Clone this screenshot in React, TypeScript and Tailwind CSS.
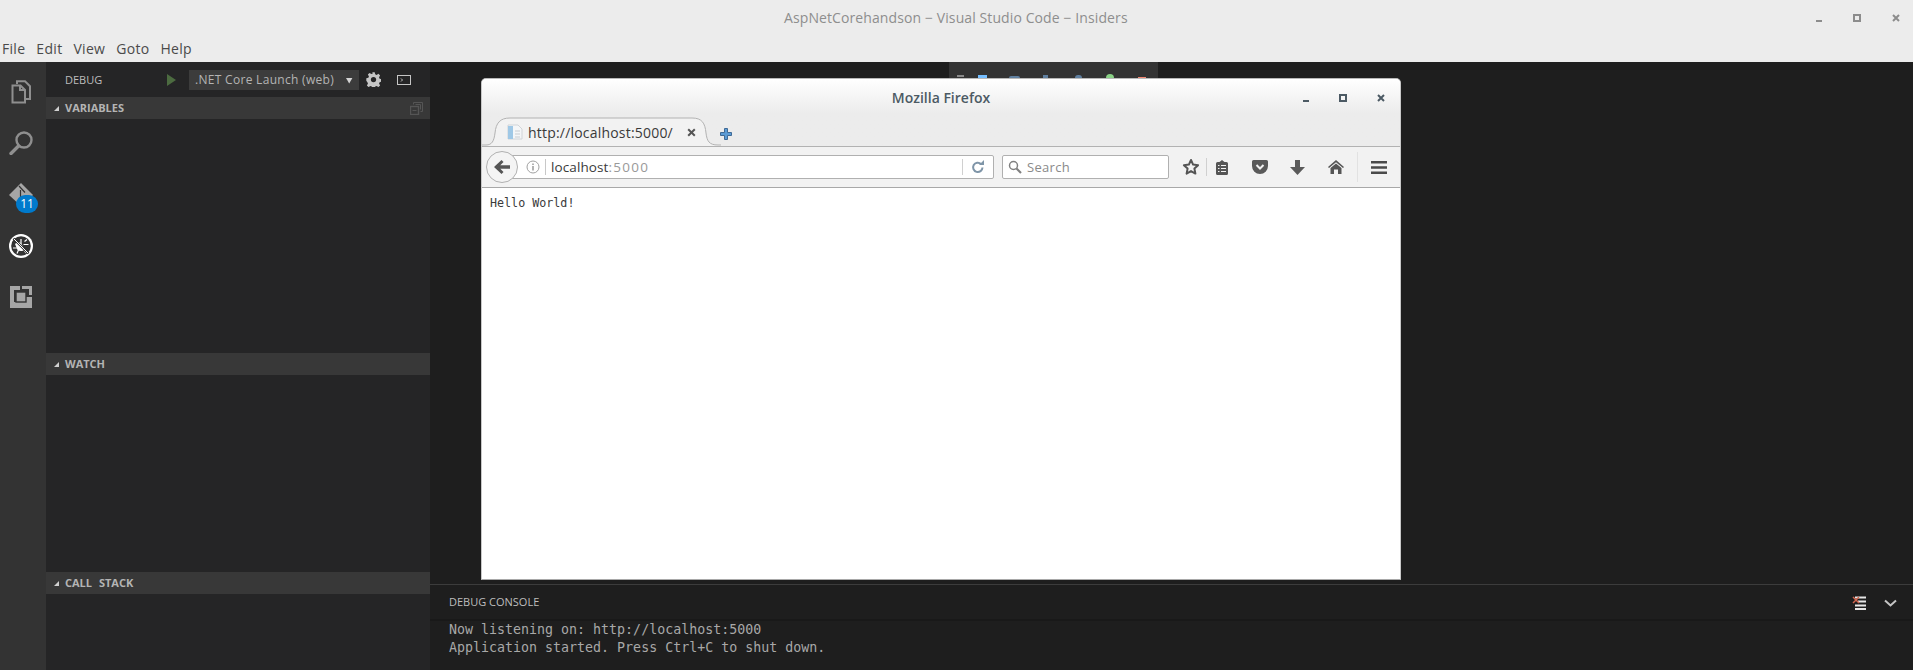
import type { ReactNode } from "react";

const UI_FONT = "font-['Open_Sans','Noto_Sans',sans-serif]";

/* ---------- shared bits ---------- */

function WinControls({ color, gap }: { color: string; gap: string }) {
  return (
    <div className={`flex items-center ${gap}`}>
      <svg width="6" height="12" viewBox="0 0 6 12">
        <rect x="0" y="8" width="6" height="2" fill={color} />
      </svg>
      <svg width="8" height="12" viewBox="0 0 8 12">
        <rect x="1" y="3" width="6" height="6" fill="none" stroke={color} strokeWidth="2" />
      </svg>
      <svg width="8" height="12" viewBox="0 0 8 12">
        <path d="M1 3l6 6M7 3l-6 6" stroke={color} strokeWidth="2" fill="none" />
      </svg>
    </div>
  );
}

function PanelHeader({ label, children }: { label: string; children?: ReactNode }) {
  return (
    <div className="flex h-[22px] items-center bg-[#383838] pl-[8px] pr-[7px]">
      <svg width="7" height="7" viewBox="0 0 7 7" className="mr-[4px] -translate-x-[1px]">
        <path d="M6 1v5H1z" fill="#d0d0d0" />
      </svg>
      <span className="text-[11px] font-bold text-[#b4b4b4] [word-spacing:4px]">{label}</span>
      <div className="ml-auto">{children}</div>
    </div>
  );
}

/* ---------- activity bar ---------- */

function ActivityBar() {
  return (
    <div className="flex w-[46px] shrink-0 flex-col items-center bg-[#333333] pr-[4px] pt-[18px]">
      <div className="flex h-[51px] w-full items-start justify-center">
        <svg width="20" height="24" viewBox="0 0 20 24" fill="none" stroke="#8f8f8f" strokeWidth="2">
          <path d="M6 4V1.200h8l5 5V19h-4" />
          <path d="M1.500 5.500h8l4.500 4.500v12.500H1.500z" />
          <path d="M9 5.500V10h5" />
        </svg>
      </div>
      <div className="flex h-[52px] w-full items-start justify-center">
        <svg width="24" height="24" viewBox="0 0 24 24" fill="none" stroke="#8f8f8f">
          <circle cx="15" cy="9" r="7.500" strokeWidth="2.400" />
          <path d="M9.500 15l-7.500 7.500" strokeWidth="3.400" strokeLinecap="round" />
        </svg>
      </div>
      <div className="relative flex h-[51px] w-full items-start justify-center">
        <svg width="24" height="24" viewBox="0 0 24 24">
          <path d="M12 0l12 12L13 24 0 12z" fill="#a6a6a6" />
          <path d="M10 3l6 6.500M11.500 7v8" stroke="#333333" strokeWidth="1.200" fill="none" />
        </svg>
        <span className="absolute left-[16px] top-[12px] flex h-[18px] w-[22px] items-center justify-center rounded-full bg-[#007acc] text-[12px] text-white">
          11
        </span>
      </div>
      <div className="flex h-[52px] w-full items-start justify-center">
        <svg width="24" height="24" viewBox="0 0 24 24">
          <circle cx="12" cy="12" r="12" fill="#ffffff" />
          <circle cx="12" cy="12" r="9.800" fill="#333333" />
          <path d="M6 10c2-2 4-2.500 6-1l3.500 6.500c-1.500 2-5 2-7 .5z" fill="#ffffff" />
          <path d="M12 5v5M15.500 7.500l2.500-2M14.500 10.500H19.500M4 14h4M8 19.500l1.500-3.500M15.500 17l2 2" stroke="#ffffff" strokeWidth="1.200" />
          <path d="M4.500 4.500l15 15" stroke="#333333" strokeWidth="2.400" />
          <path d="M5 5l14 14" stroke="#ffffff" strokeWidth="1" />
        </svg>
      </div>
      <div className="flex h-[52px] w-full items-start justify-center">
        <svg width="22" height="22" viewBox="0 0 22 22">
          <path d="M0 0h10v4H4v12h12v-5h6v11H0z" fill="#a6a6a6" />
          <path d="M12 0h10v9h-3V3h-7z" fill="#a6a6a6" />
          <rect x="6" y="6" width="10" height="10" fill="#a6a6a6" stroke="#333333" strokeWidth="1.400" />
        </svg>
      </div>
    </div>
  );
}

/* ---------- debug sidebar ---------- */

function DebugToolbar() {
  return (
    <div className="flex h-[35px] items-center pl-[19px]">
      <span className="w-[102px] pt-[1px] text-[11px] text-[#bdbdbd]">DEBUG</span>
      <svg width="9" height="12" viewBox="0 0 9 12">
        <path d="M0 0l9 6-9 6z" fill="#4c6b40" />
      </svg>
      <div className="ml-[13px] flex h-[20px] w-[170px] items-center justify-between bg-[#3c3c3c] pl-[6px] pr-[6px] pt-[1px] text-[12px] tracking-[0.3px] text-[#b4b4b4]">
        <span>.NET Core Launch (web)</span>
        <svg width="7" height="7" viewBox="0 0 7 7">
          <path d="M0 1h6.400L3.200 6.500z" fill="#d4d4d4" />
        </svg>
      </div>
      <svg width="15" height="15" viewBox="0 0 24 24" className="ml-[7px]">
        <path
          d="M10 0h4l.8 3.400 2.400 1 3-1.800 2.800 2.800-1.800 3 1 2.400 3.400.8v4l-3.400.8-1 2.400 1.800 3-2.800 2.800-3-1.800-2.400 1-.8 3.400h-4l-.8-3.400-2.400-1-3 1.800-2.800-2.800 1.800-3-1-2.400L0 14v-4l3.400-.8 1-2.400-1.800-3 2.800-2.800 3 1.800 2.400-1z"
          fill="#c5c5c5"
          transform="scale(0.96) translate(.5 .5)"
        />
        <circle cx="12" cy="12" r="4.200" fill="#252526" />
      </svg>
      <svg width="14" height="10" viewBox="0 0 14 10" fill="none" className="ml-[16px]">
        <rect x=".5" y=".5" width="13" height="9" stroke="#c5c5c5" />
        <path d="M4 3.500L5.500 5 4 6.500" stroke="#c5c5c5" />
      </svg>
    </div>
  );
}

function Sidebar() {
  return (
    <div className="flex w-[384px] shrink-0 flex-col bg-[#252526]">
      <DebugToolbar />
      <PanelHeader label="VARIABLES">
        <svg width="13" height="13" viewBox="0 0 13 13" fill="none" stroke="#555555" className="block">
          <path d="M3.500 2.500V.5h9v9h-2M5.500 2.500h5v5" />
          <rect x=".5" y="4.500" width="8" height="8" strokeWidth="1.400" />
          <path d="M2.500 8.500h4" />
        </svg>
      </PanelHeader>
      <div className="h-[234px]" />
      <PanelHeader label="WATCH" />
      <div className="h-[197px]" />
      <PanelHeader label="CALL STACK" />
      <div className="flex-1" />
    </div>
  );
}

/* ---------- firefox window ---------- */

function ToolbarIcons() {
  return (
    <div className="flex shrink-0 items-center">
      {/* star */}
      <svg width="18" height="18" viewBox="0 0 18 18" className="ml-[13px]">
        <path d="M9 2l2.100 4.600 5 .6-3.700 3.400 1 5L9 13.100l-4.400 2.500 1-5L1.900 7.200l5-.6z" fill="none" stroke="#555555" strokeWidth="2" strokeLinejoin="round" />
      </svg>
      <div className="ml-[6px] h-[18px] w-px bg-[#d0d0d0]" />
      {/* clipboard list */}
      <svg width="14" height="15" viewBox="0 0 14 15" className="ml-[8px]">
        <path d="M1 3.500a1.500 1.500 0 0 1 1.500-1.500H4.500L7 0l2.500 2H11.500A1.500 1.500 0 0 1 13 3.500V13.500A1.500 1.500 0 0 1 11.500 15H2.500A1.500 1.500 0 0 1 1 13.500z" fill="#555555" />
        <path d="M3 5.500h1.500M3 8.500h1.500M3 11.500h1.500M6 5.500h5M6 8.500h5M6 11.500h5" stroke="#f2f2f2" strokeWidth="1.200" />
      </svg>
      {/* pocket */}
      <svg width="16" height="14" viewBox="0 0 16 14" className="ml-[23px]">
        <path d="M1.500 0h13A1.500 1.500 0 0 1 16 1.500V6a8 8 0 0 1-16 0V1.500A1.500 1.500 0 0 1 1.500 0z" fill="#5a5a5a" />
        <path d="M4.500 5L8 8.500 11.500 5" stroke="#f2f2f2" strokeWidth="2" fill="none" />
      </svg>
      {/* download */}
      <svg width="15" height="15" viewBox="0 0 15 15" className="ml-[22px]">
        <path d="M5 0h5v7h5l-7.500 8L0 7h5z" fill="#5a5a5a" />
      </svg>
      {/* home */}
      <svg width="16" height="14" viewBox="0 0 16 14" className="ml-[23px]">
        <path d="M8 0l8 7-1 1-7-5.800L1 8 0 7z" fill="#555555" />
        <path d="M8 3.600L13.500 8v6H10V9.500H6V14H2.500V8z" fill="#555555" />
      </svg>
      <div className="ml-[13px] h-[30px] w-px bg-[#e2e2e2]" />
      {/* hamburger */}
      <svg width="16" height="13" viewBox="0 0 16 13" className="ml-[13px]">
        <path d="M0 0h16v2.400H0zM0 5.300h16v2.400H0zM0 10.600h16V13H0z" fill="#4a4a4a" />
      </svg>
    </div>
  );
}

function TabStrip() {
  return (
    <div className="flex h-[41px] items-end border-b border-[#b2b2b2]">
      <div className="relative flex h-[29px] w-[239px] shrink-0 items-center pl-[25px] pt-[1px]">
        <svg width="239" height="29" viewBox="0 0 239 29" className="absolute left-0 top-0" fill="none">
          <path
            d="M0 28H4C10 28 12 24 13 16C14 6 18 1 28 1H210C220 1 223 6 224 16C225 24 227 28 236 28H239V29H0z"
            fill="#f2f2f2"
          />
          <path
            d="M0 28H4C10 28 12 24 13 16C14 6 18 1 28 1H210C220 1 223 6 224 16C225 24 227 28 236 28H239"
            stroke="#b2b2b2"
          />
        </svg>
        <svg width="16" height="16" viewBox="0 0 16 16" className="relative">
          <path d="M1 1h10l4 4v10H1z" fill="#f4f6f8" stroke="#d0d4d8" />
          <rect x="1" y="2" width="5" height="13" fill="#9fc8e6" />
          <path d="M8 7h5M8 10h5M8 13h5" stroke="#c8ccd0" />
        </svg>
        <span className="relative ml-[5px] w-[159px] text-[14px] tracking-[0.2px] text-[#3a3a3a]">http://localhost:5000/</span>
        <svg width="9" height="9" viewBox="0 0 9 9" className="relative">
          <path d="M1.200 1.200l6.600 6.600M7.800 1.200L1.200 7.800" stroke="#555555" strokeWidth="2" />
        </svg>
      </div>
      <svg width="12" height="12" viewBox="0 0 12 12" className="mb-[6px] -ml-[1px]">
        <path d="M4.500 .5h3v4h4v3h-4v4h-3v-4h-4v-3h4z" fill="#5b9bd5" stroke="#3f6a96" />
      </svg>
    </div>
  );
}

function FirefoxWindow() {
  return (
    <div className={`absolute left-[51px] top-[16px] flex h-[502px] w-[920px] flex-col overflow-hidden rounded-t-[5px] border border-t-[#b8b8b8] border-x-[#c8c8c8] border-b-[#a8a8a8] bg-white ${UI_FONT}`}>
      <div className="bg-gradient-to-b from-white to-[#ececec] to-50%">
        <div className="relative flex h-[27px] items-center justify-center pt-[9px]">
          <span className="text-[14px] font-semibold text-[#4c5a64]">Mozilla Firefox</span>
          <div className="absolute right-[15px] top-[13px]">
            <WinControls color="#4c5a64" gap="gap-[30px]" />
          </div>
        </div>
        <TabStrip />
      </div>
      <div className="flex h-[41px] items-center border-b border-[#a8a8a8] bg-[#f2f2f2]">
        <div className="relative ml-[4px] flex shrink-0 items-center">
          <div className="z-10 flex h-[32px] w-[32px] items-center justify-center rounded-full border border-[#b0b0b0] bg-[#f4f4f4]">
            <svg width="16" height="14" viewBox="0 0 16 14">
              <path d="M7.500 0l2 2-3.200 3.200H16v3.600H6.300L9.500 12l-2 2L0 7z" fill="#555555" />
            </svg>
          </div>
          <div className="-ml-[6px] flex h-[24px] w-[482px] items-center rounded-r-[2px] border border-[#b0b0b0] bg-white pl-[13px]">
            <svg width="14" height="14" viewBox="0 0 14 14" fill="none">
              <circle cx="7" cy="7" r="6" stroke="#a0a0a0" />
              <path d="M7 6v4.500M7 3.500v1.500" stroke="#808080" strokeWidth="1.200" />
            </svg>
            <div className="ml-[5px] h-[16px] w-px bg-[#c8c8c8]" />
            <span className="ml-[5px] pt-[1px] text-[13.500px] tracking-[0.1px] text-[#3a3a3a]">localhost</span>
            <span className="pt-[1px] text-[13.500px] tracking-[1.300px] text-[#999999]">:5000</span>
            <div className="ml-auto h-[16px] w-px bg-[#d0d0d0]" />
            <svg width="14" height="14" viewBox="0 0 14 14" fill="none" className="ml-[8px] mr-[8px]">
              <path d="M11.500 7.500a4.700 4.700 0 1 1-1.500-3.600" stroke="#7f95a8" strokeWidth="2" />
              <path d="M8 5h5V0z" fill="#7f95a8" />
            </svg>
          </div>
        </div>
        <div className="ml-[8px] flex h-[24px] w-[167px] shrink-0 items-center rounded-[2px] border border-[#b0b0b0] bg-white pl-[5px]">
          <svg width="14" height="14" viewBox="0 0 14 14" fill="none" stroke="#808080">
            <circle cx="5.500" cy="5.500" r="4" strokeWidth="1.500" />
            <path d="M8.500 8.500l4.500 4.500" strokeWidth="2.200" />
          </svg>
          <span className="ml-[5px] pt-[1px] text-[13px] tracking-[0.3px] text-[#8a8a8a]">Search</span>
        </div>
        <ToolbarIcons />
      </div>
      <div className="flex-1 bg-white pl-[8px] pt-[8px] font-['DejaVu_Sans_Mono',monospace] text-[11.700px] leading-[14px] text-[#3a3a3a]">
        Hello World!
      </div>
    </div>
  );
}

/* ---------- bottom panel ---------- */

function DebugConsole() {
  return (
    <div className="flex h-[86px] shrink-0 flex-col border-t border-[#3c3c3c] bg-[#1e1e1e]">
      <div className="flex h-[36px] items-center border-b-2 border-[#191919] pl-[19px] pr-[16px] pt-[1px]">
        <span className="text-[11px] text-[#bdbdbd]">DEBUG CONSOLE</span>
        <svg width="14" height="14" viewBox="0 0 14 14" className="ml-auto">
          <path d="M3 1.500h11M6 5.500h8M3 9.500h11M3 13h11" stroke="#e6e6e6" strokeWidth="1.800" />
          <path d="M1 1l6 6M7 1L1 7" stroke="#d0654f" strokeWidth="1.500" />
        </svg>
        <svg width="13" height="8" viewBox="0 0 13 8" className="ml-[18px]" fill="none">
          <path d="M1 1.500l5.500 5 5.500-5" stroke="#c5c5c5" strokeWidth="2" />
        </svg>
      </div>
      <div className="pl-[19px] font-['DejaVu_Sans_Mono',monospace] text-[13.300px] leading-[18px] text-[#a8a8a8]">
        <div>Now listening on: http://localhost:5000</div>
        <div>Application started. Press Ctrl+C to shut down.</div>
      </div>
    </div>
  );
}

export default function App() {
  return (
    <div className={`flex h-[670px] w-[1913px] flex-col overflow-hidden bg-[#1e1e1e] ${UI_FONT}`}>
      <div className="flex h-[36px] shrink-0 items-center bg-[#ececec] pb-[1px] pl-[784px]">
        <span className="text-[14px] tracking-[0.1px] text-[#8e8e8e]">AspNetCorehandson − Visual Studio Code − Insiders</span>
        <div className="ml-auto mr-[13px]">
          <WinControls color="#8c8c8c" gap="gap-[31px]" />
        </div>
      </div>
      <div className="flex h-[26px] shrink-0 items-center gap-[11px] bg-[#ececec] pb-[2px] pl-[2px] text-[14px] tracking-[0.3px] text-[#4a4a4a]">
        <span>File</span>
        <span>Edit</span>
        <span>View</span>
        <span>Goto</span>
        <span>Help</span>
      </div>
      <div className="flex min-h-0 flex-1">
        <ActivityBar />
        <Sidebar />
        <div className="flex min-w-0 flex-1 flex-col">
          <div className="relative flex-1">
            {/* debug action bar, mostly hidden behind the browser */}
            <div className="absolute left-[519px] top-0 flex h-[16px] w-[209px] items-end bg-[#333333] pl-[8px]">
              <span className="mb-[1px] h-[2px] w-[7px] bg-[#8a8a8a]" />
              <span className="ml-[14px] h-[3px] w-[9px] bg-[#75beff]" />
              <span className="ml-[22px] h-[2px] w-[11px] rounded-t bg-[#5f7f9f]" />
              <span className="ml-[23px] h-[3px] w-[5px] bg-[#5f7f9f]" />
              <span className="ml-[27px] h-[3px] w-[7px] rounded-t bg-[#5f7f9f]" />
              <span className="ml-[24px] h-[4px] w-[8px] rounded-t bg-[#89d185]" />
              <span className="ml-[24px] h-[1px] w-[8px] bg-[#f48771]" />
            </div>
            <FirefoxWindow />
          </div>
          <DebugConsole />
        </div>
      </div>
    </div>
  );
}
